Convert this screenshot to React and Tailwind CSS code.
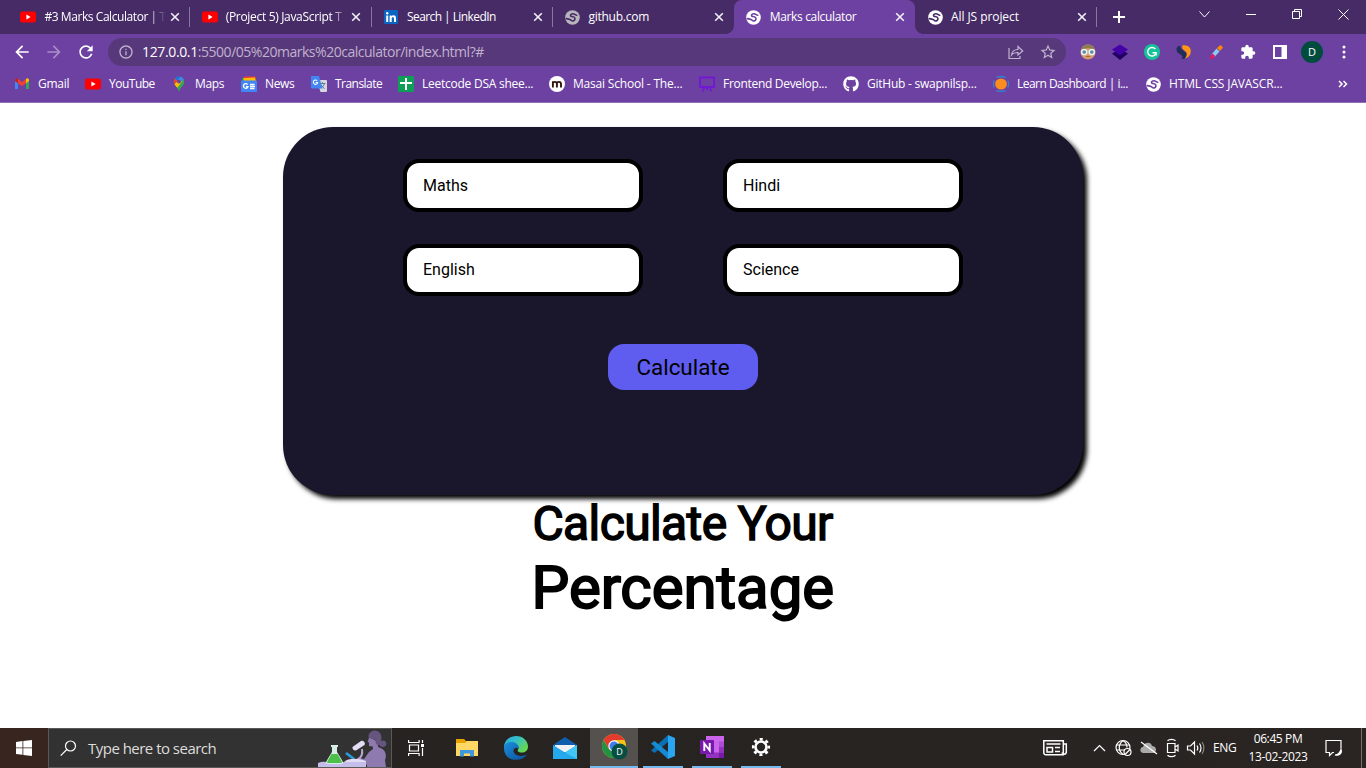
import React from "react";
import { MdOutlineInfo, MdExtension, MdRefresh, MdArrowBack, MdArrowForward, MdStarBorder } from "react-icons/md";
import { FaGithub } from "react-icons/fa";

const ui = "font-['Open_Sans','Noto_Sans',sans-serif]";

function YouTube() {
  return (
    <svg width="16" height="16" viewBox="0 0 16 16">
      <rect x="0" y="2.5" width="16" height="11" rx="2.2" fill="#f00" />
      <path d="M6.4 5.6v4.8L10.6 8z" fill="#fff" />
    </svg>
  );
}

function LinkedIn() {
  return (
    <svg width="14" height="14" viewBox="0 0 14 14">
      <rect width="14" height="14" rx="1" fill="#0a66c2" />
      <path d="M2.2 5.4h2V12h-2zM5.6 5.4h1.9v.9c.9-1.5 4.5-1.6 4.5 1.6V12h-2V8.500c0-1.900-2.300-1.700-2.300 0V12H5.600z" fill="#fff" />
      <circle cx="3.200" cy="3.200" r="1.200" fill="#fff" />
    </svg>
  );
}

function Globe({ color = "#fff", ink = "#6d41a1" }) {
  return (
    <svg width="15" height="15" viewBox="0 0 15 15">
      <circle cx="7.500" cy="7.500" r="7.300" fill={color} />
      <path d="M11.800 5.300C10.500 5.300 9.800 3.700 7.800 3.700 5.500 3.700 4.700 5.800 6.600 6.500 8.600 7 10.400 7.300 9.900 9.200 9.400 11 7.300 11.500 6.200 10.200 5.200 8.900 3.200 9 1.400 8.600" fill="none" stroke={ink} strokeWidth="1.600" strokeLinecap="round" />
    </svg>
  );
}

function Gmail() {
  return (
    <svg width="16" height="16" viewBox="0 0 16 16">
      <path d="M1 4.500V13h3V7z" fill="#4285f4" />
      <path d="M15 4.500V13h-3V7z" fill="#34a853" />
      <path d="M1 4c0-1.700 1.800-2.200 3-1.200v4.400L1 5z" fill="#c5221f" />
      <path d="M15 4c0-1.700-1.800-2.200-3-1.200v4.400L15 5z" fill="#fbbc04" />
      <path d="M4 3l4 3 4-3v4.200l-4 3-4-3z" fill="#ea4335" />
    </svg>
  );
}

function Maps() {
  return (
    <svg width="16" height="16" viewBox="0 0 16 16">
      <path d="M8 .5A5.200 5.200 0 0 0 2.800 5.700C2.800 9.600 7 11 8 15.500c1-4.500 5.200-5.900 5.200-9.800A5.200 5.200 0 0 0 8 .5z" fill="#34a853" />
      <path d="M4 2.400A5.200 5.200 0 0 1 9.600.8L6 5z" fill="#1a73e8" />
      <path d="M4 2.400C2.400 4.300 2.500 6.500 3.500 8.200L7 4.900z" fill="#ea4335" />
      <path d="M9.600.8a5.200 5.200 0 0 1 3 2.500L9 7.400 7 4z" fill="#4285f4" />
      <path d="M3.500 8.200c.7 1.200 1.900 2.300 2.900 3.700l5-6.200L8 4z" fill="#fbbc04" />
      <path d="M12.600 3.300c1.500 3.600-1 6-2.700 8.000-1 1.300-1.500 2.500-1.900 4.200-.4-1.500-.8-2.500-1.600-3.600z" fill="#34a853" />
      <circle cx="8" cy="5.600" r="1.900" fill="#6d41a1" />
    </svg>
  );
}

function News() {
  return (
    <svg width="16" height="16" viewBox="0 0 16 16">
      <path d="M1 2h6v5H1z" fill="#0f9d58" />
      <path d="M3 .5h11.500V5H3z" fill="#ea4335" />
      <path d="M2 2.200 14 1.500l1 4H3z" fill="#fbbc04" />
      <rect x="0" y="4.500" width="16" height="11.500" rx="1" fill="#4285f4" />
      <path d="M6.600 8.600A2.300 2.300 0 1 0 7 10.600H4.900M9 8.500h4.500M9 10.500h5M9 12.500h4.500" fill="none" stroke="#fff" strokeWidth="1.300" />
    </svg>
  );
}

function Translate() {
  return (
    <svg width="16" height="16" viewBox="0 0 16 16">
      <path d="M6 4h9a1 1 0 0 1 1 1v10a1 1 0 0 1-1 1H9.500z" fill="#d5d9df" />
      <path d="M8.500 7.500h6M11.500 6.200v1.300M13.500 7.500c-.5 2-1.800 3.500-3.500 4.500M10.200 9c.7 1.500 1.800 2.700 3.300 3.500" stroke="#607d8b" fill="none" />
      <path d="M1 0h7l3.500 12.500H1a1 1 0 0 1-1-1V1a1 1 0 0 1 1-1z" fill="#4285f4" />
      <path d="M6.200 4.700A2.200 2.200 0 1 0 6.700 6.500H4.600" fill="none" stroke="#fff" strokeWidth="1.100" />
    </svg>
  );
}

function Sheets() {
  return (
    <svg width="16" height="16" viewBox="0 0 16 16">
      <rect width="16" height="16" rx="1" fill="#0f9d58" />
      <path d="M7 2h2v4h5v2H9v6H7V8H2V6h5z" fill="#fff" />
    </svg>
  );
}

function Masai() {
  return (
    <svg width="16" height="16" viewBox="0 0 16 16">
      <circle cx="8" cy="8" r="8" fill="#fff" />
      <path d="M3.900 11.500V5.300M3.900 7.500c0-2.200 4-2.300 4 .2v3.800M7.900 7.700c0-2.500 4.100-2.400 4.100.2v3.600" fill="none" stroke="#33180f" strokeWidth="1.900" />
    </svg>
  );
}

function Easel() {
  return (
    <svg width="16" height="16" viewBox="0 0 16 16" fill="none" stroke="#7415d6" strokeWidth="1.800">
      <rect x="1" y="1.500" width="14" height="9.500" />
      <path d="M5.500 11 3.500 15.500M10.500 11l2 4.500M8 11V14" />
    </svg>
  );
}

function Learn() {
  return (
    <svg width="16" height="16" viewBox="0 0 16 16" fill="none">
      <ellipse cx="8" cy="8" rx="5.900" ry="5.500" fill="#fb8c1e" />
      <path d="M3.500 1.300c2.500-.8 6.500-.8 9 0M3.500 14.700c2.500.8 6.500.8 9 0M1.300 4.500C.2 6.500.2 9.500 1.300 11.500M14.700 4.500c1.100 2 1.100 5 0 7" stroke="#2d86d0" strokeWidth="1.300" />
    </svg>
  );
}

function Close() {
  return (
    <svg width="10" height="10" viewBox="0 0 10 10" stroke="#f3eff8" strokeWidth="1.600">
      <path d="M1.200 1.200l7.600 7.600M8.800 1.200 1.200 8.800" />
    </svg>
  );
}

const tabs = [
  { icon: <YouTube />, title: "#3 Marks Calculator | T", track: "tracking-[-0.430px]", sep: true, fade: true },
  { icon: <YouTube />, title: "(Project 5) JavaScript T", track: "tracking-[-0.320px]", sep: true, fade: true },
  { icon: <LinkedIn />, title: "Search | LinkedIn", track: "tracking-[-0.580px]", sep: true },
  { icon: <Globe color="#b9b5bd" ink="#462b66" />, title: "github.com", track: "tracking-[-0.240px]" },
  { icon: <Globe />, title: "Marks calculator", track: "tracking-[-0.340px]", active: true },
  { icon: <Globe ink="#462b66" />, title: "All JS project", track: "tracking-[-0.080px]", sep: true },
];

function Tab({ tab }) {
  return (
    <div className={`relative flex h-[34px] w-[181.330px] shrink-0 items-center pl-3 pr-[9.600px] ${tab.active ? "rounded-t-lg bg-[#6d41a1]" : ""}`}>
      {tab.active && (
        <>
          <span className="absolute -left-2 bottom-0 size-2 bg-[radial-gradient(circle_at_0_0,transparent_7.500px,#6d41a1_8px)]" />
          <span className="absolute -right-2 bottom-0 size-2 bg-[radial-gradient(circle_at_100%_0,transparent_7.500px,#6d41a1_8px)]" />
        </>
      )}
      <span className="flex w-4 shrink-0 justify-center">{tab.icon}</span>
      <span className={`ml-2 w-[122px] whitespace-nowrap ${tab.track} ${tab.fade ? "[mask-image:linear-gradient(to_right,#000_86%,transparent)]" : ""}`}>
        {tab.title}
      </span>
      <span className="ml-auto flex"><Close /></span>
      {tab.sep && <span className="absolute right-[-0.600px] top-[7px] h-5 w-px bg-[#8a77a0]" />}
    </div>
  );
}

function TabStrip() {
  return (
    <div className="flex h-[34px] bg-[#462b66] pl-[8.400px] text-xs text-white">
      {tabs.map((t) => <Tab key={t.title} tab={t} />)}
      <svg className="ml-[16.600px] mt-[11px]" width="12" height="12" viewBox="0 0 12 12" stroke="#fff" strokeWidth="2"><path d="M6 0v12M0 6h12" /></svg>
      <div className="ml-auto flex pr-[14px] pt-[9px]">
        <svg width="155" height="12" viewBox="0 0 155 12" fill="none" stroke="#fff">
          <path d="M2.500 2.500 7.500 8l5-5.500M49 5.500h10M95.500 2.500h7v7h-7zM97.500 2.500v-2h7v7h-2M141.500.5l10 10M151.500.5l-10 10" />
        </svg>
      </div>
    </div>
  );
}

function Extensions() {
  return (
    <div className="flex items-center">
      <svg className="mr-4" width="16" height="16" viewBox="0 0 16 16">
        <circle cx="8" cy="8" r="7.500" fill="#d49a6a" />
        <path d="M1 6C2 1 5 .5 8 .5S14 1 15 6L8 4z" fill="#8f7a55" />
        <circle cx="4.200" cy="8" r="2.600" fill="#5b8fa0" stroke="#e9f3f4" strokeWidth="1.500" />
        <circle cx="11.800" cy="8" r="2.600" fill="#5b8fa0" stroke="#e9f3f4" strokeWidth="1.500" />
        <path d="M6 12.500h4" stroke="#b7653f" />
      </svg>
      <svg className="mr-4" width="16" height="16" viewBox="0 0 16 16">
        <path d="M0 9.500 8 5l8 4.500L8 16z" fill="#210064" />
        <path d="M0 5.500 8 .5l8 5-8 6z" fill="#4500a8" />
      </svg>
      <svg className="mr-4" width="16" height="16" viewBox="0 0 16 16">
        <circle cx="8" cy="8" r="8" fill="#15c39a" />
        <path d="M11.300 5A4.300 4.300 0 1 0 12 9.300M8.500 8.700h3.600v2.800" fill="none" stroke="#fff" strokeWidth="1.400" />
      </svg>
      <svg className="mr-4" width="16" height="16" viewBox="0 0 16 16">
        <path d="M4.500 1.500C0 2-1 7 3 9.500s4 3.500 2.500 5.500c5.500.5 6.500-5 3.500-7S3.500 4 4.500 1.500z" fill="#1f2d57" />
        <path d="M6.500 1.500C13 .5 16 5 14.500 9.500c-.7 2.500-3 4.500-5.500 5 3-4 2-6 0-7.500-2.500-2-3.500-3-2.500-5.500z" fill="#fe9713" />
      </svg>
      <svg className="mr-4" width="16" height="16" viewBox="0 0 16 16">
        <path d="m9 4 3.500-3L15 3.500 12 7z" fill="#ff8a00" />
        <path d="m8.500 4.500 3 3-5 5.500-3-2.500z" fill="#8bc9f0" />
        <path d="m4.500 9.500 2.700 2.500L4 15l-2.500-.5z" fill="#ec1561" />
      </svg>
      <MdExtension className="mr-[17px] size-4 text-white" />
      <svg className="mr-[14px]" width="14" height="14" viewBox="0 0 14 14"><path d="M0 0h14v14H0zM2 2v10h6.500V2z" fill="#fff" fillRule="evenodd" /></svg>
      <span className="mr-[19px] flex size-[22px] items-center justify-center rounded-full bg-[#004d40] text-[11px] text-white">D</span>
      <svg width="4" height="14" viewBox="0 0 4 14" fill="#fff"><circle cx="2" cy="2" r="1.500" /><circle cx="2" cy="7" r="1.500" /><circle cx="2" cy="12" r="1.500" /></svg>
    </div>
  );
}

function Toolbar() {
  return (
    <div className="flex h-[36px] items-center justify-between pl-3 pr-5">
      <div className="flex items-center text-white">
        <MdArrowBack className="size-5" />
        <MdArrowForward className="ml-3 size-5 text-[#a78dc6]" />
        <MdRefresh className="ml-3 size-5" />
      </div>
      <div className="ml-3 mr-[14px] flex h-7 flex-1 items-center rounded-full bg-[#57387b] px-[10px] text-[#c0b3ce]">
        <MdOutlineInfo className="size-4" />
        <span className="ml-2 whitespace-nowrap text-sm tracking-[-0.480px]"><span className="tracking-[-0.360px] text-white">127.0.0.1</span>:5500/05%20marks%20calculator/index.html?#</span>
        <svg className="ml-auto mr-[15px]" width="16" height="16" viewBox="0 0 16 16" fill="none" stroke="currentColor" strokeWidth="1.200">
          <path d="M1 4v10.500h11V12M3.500 11c.5-4 3-5.500 6.500-5.500v-3L14.700 7 10 11V8.500C7 8.500 5 9 3.500 11z" />
        </svg>
        <MdStarBorder className="-mr-px size-[18px]" />
      </div>
      <Extensions />
    </div>
  );
}

const bookmarks = [
  { icon: <Gmail />, label: "Gmail", w: "w-[71px]", track: "tracking-[-0.240px]" },
  { icon: <YouTube />, label: "YouTube", w: "w-[86px]", track: "tracking-[-0.500px]" },
  { icon: <Maps />, label: "Maps", w: "w-[70px]", track: "tracking-[-0.340px]" },
  { icon: <News />, label: "News", w: "w-[70px]", track: "tracking-[-0.340px]" },
  { icon: <Translate />, label: "Translate", w: "w-[87px]", track: "tracking-[-0.540px]" },
  { icon: <Sheets />, label: "Leetcode DSA shee...", w: "w-[151px]", track: "tracking-[-0.250px]" },
  { icon: <Masai />, label: "Masai School - The...", w: "w-[150px]", track: "tracking-[-0.190px]" },
  { icon: <Easel />, label: "Frontend Develop...", w: "w-[144px]", track: "tracking-[-0.300px]" },
  { icon: <FaGithub className="size-4" />, label: "GitHub - swapnilsp...", w: "w-[150px]", track: "tracking-[-0.240px]" },
  { icon: <Learn />, label: "Learn Dashboard | i...", w: "w-[152px]", track: "tracking-[-0.520px]" },
  { icon: <Globe />, label: "HTML CSS JAVASCR...", w: "w-[150px]", track: "tracking-[-0.130px]" },
];

function Bookmarks() {
  return (
    <div className="flex h-[33px] items-center border-b border-[#8f6fb6] pb-1 pl-[14px] pr-[18px] text-xs text-white">
      {bookmarks.map((b) => (
        <div key={b.label} className={`flex shrink-0 items-center gap-2 whitespace-nowrap ${b.w} ${b.track}`}>
          <span className="flex w-4 shrink-0 justify-center">{b.icon}</span>
          <span>{b.label}</span>
        </div>
      ))}
      <svg className="ml-auto" width="10" height="8" viewBox="0 0 10 8" fill="none" stroke="#fff" strokeWidth="1.500"><path d="m1 1 3 3-3 3M5.500 1l3 3-3 3" /></svg>
    </div>
  );
}

function Field({ label }) {
  return (
    <div className="flex h-[52.600px] w-60 items-center rounded-2xl border-4 border-black bg-white px-4 pt-[0.800px] text-base text-black">{label}</div>
  );
}

function Page() {
  return (
    <main className="flex flex-1 flex-col items-center bg-white pt-6 font-['Roboto',sans-serif] text-black">
      <section className="flex h-[368px] w-[800px] flex-col items-center rounded-[50px] bg-[#1a172c] pt-8 shadow-[4px_4px_5px_#000]">
        <div className="grid grid-cols-2 gap-x-20 gap-y-8">
          <Field label="Maths" />
          <Field label="Hindi" />
          <Field label="English" />
          <Field label="Science" />
        </div>
        <button className="mt-12 h-[46px] w-[150px] rounded-2xl bg-[#5f5df0] pt-[2px] text-[22.400px]">Calculate</button>
      </section>
      <h1 className="-ml-px w-[300px] whitespace-nowrap text-[48px] leading-[57px] tracking-[-0.620px] [-webkit-text-stroke:1.500px_#000]">Calculate Your</h1>
      <h2 className="-ml-[3px] w-[300px] whitespace-nowrap text-[60px] leading-[72px] tracking-[-0.070px] [-webkit-text-stroke:1.900px_#000]">Percentage</h2>
    </main>
  );
}

function SearchArt() {
  return (
    <svg className="ml-auto self-end" width="70" height="38" viewBox="0 0 70 38">
      <path d="M51 8c0 3-2 4-1 5l1 .5v3c0 1 2 1 3.500.7L55 20l-4 3-5 7-4-1-1 4 8 3v2h19l-1-7c2-5 1-11-7-13v-5z" fill="#8e7aae" />
      <path d="M50.500 8C50 2 58-1 62 4c2 3 1.500 6 1 8 4-2 7 2 4.500 5-2 2-5 1-6-1-2 1-4-1-4-4-1-3-4-1-7-4z" fill="#66557f" />
      <path d="M0 34c4-2 8-1 12-1h36v5H0z" fill="#c5bdea" />
      <path d="M13 16h7v2h-1v5l5.500 9c1 2 0 3-2 3H10.500c-2 0-3-1-2-3l5.500-9v-5h-1z" fill="#d4eee5" />
      <path d="m13.500 25-4 7c-1 2 0 2 2 2h10c2 0 3 0 2-2l-4-7z" fill="#4cc04b" />
      <path d="m28 24 8 6" stroke="#299fe0" strokeWidth="2.500" />
      <path d="M34.500 18 43 12c2-1 5 2 3.500 4L38 21.500c-2 .5-4-1.500-3.500-3.500z" fill="#e5ddf5" />
      <path d="M44 20c1 5-1 9-5 11" stroke="#b7a6d3" strokeWidth="2" fill="none" />
      <path d="M26 33c4-4 14-4 22-1v1z" fill="#e2dcf3" />
    </svg>
  );
}

function TrayIcons() {
  return (
    <svg width="164" height="20" viewBox="0 0 164 20" fill="none" stroke="#fff" strokeWidth="1.200">
      <path d="M.8 2.800h19.500v14H3a2 2 0 0 1-2.200-2zM20.300 6h3v8.500a2.200 2.200 0 0 1-4.300 0M4 9.500h5.500v4.500H4zM12 9.500h5M12 13.500h5M3.500 6h14" strokeWidth="1.500" />
      <path d="m51 13 5.500-5.500L62 13" />
      <circle cx="80" cy="9.500" r="7" />
      <path d="M80 2.500c-5 4-5 10 0 14M80 2.500c3 2 4 4 4 7M73.500 7h13M73 12h9" />
      <circle cx="84.500" cy="14" r="3.500" fill="#2a2523" /><path d="m82 16.500 5-5" />
      <path d="M100 15c-4-1-3-6 0-6 1-5 8-6 9-1 5 0 5 6 2 7z" fill="#aaa" stroke="none" />
      <path d="m98 4 16 12" />
      <path d="M124.500 5.500h7.500v9h-7.500zM132 9l3-2v6l-3-2M124.500 2.800c2-1.800 6-1.800 8 0M124.500 17.200c2 1.800 6 1.800 8 0" />
      <path d="M144.500 8h3l4-4v12l-4-4h-3zM154 7.500c1 1.500 1 3.500 0 5M156.500 5.500c2 2.500 2 6.500 0 9" /><path d="M159 4c2.500 3.500 2.500 8.500 0 12" stroke="#888" />
    </svg>
  );
}

function TaskItem({ children, className = "" }) {
  return <div className={`flex h-10 items-center justify-center ${className}`}>{children}</div>;
}

function Taskbar() {
  return (
    <footer className="flex h-10 bg-[linear-gradient(to_right,#38251f_0,#38251f_48px,#262321_392px,#2a2522_100%)] text-white">
      <TaskItem className="w-12">
        <svg width="16" height="16" viewBox="0 0 16 16" fill="#fff"><path d="M0 2 6.500 1v6.500H0zM7.300 .9 16 0v7.500H7.300zM0 8.300h6.500v6.500L0 14zM7.300 8.300H16V16l-8.700-1z" /></svg>
      </TaskItem>
      <div className="flex h-10 w-[344px] items-center border border-[#5a5958] bg-[#333232] pl-[11px] pr-[3px]">
        <svg width="17" height="17" viewBox="0 0 17 17" fill="none" stroke="#fff" strokeWidth="1.200"><circle cx="10.500" cy="6" r="5" /><path d="M6.800 9.500.7 15.700" /></svg>
        <span className="ml-[11px] whitespace-nowrap text-[15px] tracking-[-0.520px] text-[#dedcdb]">Type here to search</span>
        <SearchArt />
      </div>
      <TaskItem className="w-12">
        <svg width="17" height="16" viewBox="0 0 17 16" fill="none" stroke="#fff" strokeWidth="1.200"><path d="M.6 0v2.500h10.500V0M.6 16v-2.500h10.500V16M1.500 5h9v6h-9zM14.500 0v3M14.500 8v8" /><path d="M13 4h3v3h-3z" fill="#fff" stroke="none" /></svg>
      </TaskItem>
      <TaskItem className="ml-[3px] w-12">
        <svg width="22" height="20" viewBox="0 0 22 20"><path d="M0 1h8l2 2h12v4H0z" fill="#e8a200" /><path d="M0 5h9l2-2h11v15H0z" fill="#ffd765" /><path d="M4 18.500V12h14v6.500h-4V15.500H8v3z" fill="#3f98dc" /></svg>
      </TaskItem>
      <TaskItem className="ml-px w-12">
        <svg width="24" height="24" viewBox="0 0 24 24">
          <defs>
            <linearGradient id="edgeTop" x1="0" x2="1" y2=".6"><stop stopColor="#2aa7df" /><stop offset=".5" stopColor="#35c1c6" /><stop offset="1" stopColor="#66d851" /></linearGradient>
            <linearGradient id="edgeLow" x1="0" x2="1" y2="1"><stop stopColor="#1b8fdc" /><stop offset="1" stopColor="#0c4f9b" /></linearGradient>
          </defs>
          <path d="M0 12C0 3 7 0 12 0c7 0 12 5 12 10.500 0 4-3 6-6 6-3.500 0-5-1.500-4-3 2-3-1-6-5-6-5 0-9 3-9 4.500z" fill="url(#edgeTop)" />
          <path d="M0 12C0 8 4 5.500 8 6c5 .3 7 4 6 6.500-2-2-5 0-4.500 3 1 4 7 6 13.500 3C19 26 0 27 0 12z" fill="url(#edgeLow)" />
        </svg>
      </TaskItem>
      <TaskItem className="ml-px w-12">
        <svg width="24" height="22" viewBox="0 0 24 22"><path d="M0 8 12 0l12 8v3H0z" fill="#0f5fae" /><path d="M2 8h20v7H2z" fill="#f2f2f5" /><path d="m0 8 12 7.500L24 8v14H0z" fill="#26a8ed" /><path d="m12 15.500 12 6.500V8z" fill="#42c5f7" /></svg>
      </TaskItem>
      <TaskItem className="ml-px w-12 border-b-2 border-[#76b9ed] bg-[#55514f]">
        <svg width="28" height="26" viewBox="0 0 28 26">
          <circle cx="14" cy="12" r="12" fill="#fbc116" />
          <path d="M3.600 6A12 12 0 0 1 24.400 6H14l-5 9z" fill="#e33b2e" />
          <path d="M3.600 6A12 12 0 0 0 14 24l5-9H9z" fill="#229342" />
          <circle cx="14" cy="12" r="5.700" fill="#fff" /><circle cx="14" cy="12" r="4.500" fill="#3f7cec" />
          <circle cx="19.500" cy="17.500" r="8" fill="#064e41" />
          <text x="19.500" y="20.800" textAnchor="middle" fill="#fff" fontSize="9" fontFamily="Open Sans">D</text>
        </svg>
      </TaskItem>
      <TaskItem className="ml-[5px] w-10 border-b-2 border-[#76b9ed]">
        <svg width="24" height="24" viewBox="0 0 24 24"><path d="M17 0v7L3.500 18 0 15.500z" fill="#0b6fb5" /><path d="M0 8.500 3.500 6 17 17v7z" fill="#168bd2" /><path d="m17 0 7 3v18l-7 3z" fill="#2aa6f0" /></svg>
      </TaskItem>
      <TaskItem className="ml-[9px] w-10 border-b-2 border-[#76b9ed]">
        <svg width="24" height="22" viewBox="0 0 24 22"><path d="M6 0h18v22H6z" fill="#ca64ea" /><path d="M19 5.500h5V11h-5z" fill="#ae4bd5" /><path d="M19 11h5v5.500h-5z" fill="#9332bf" /><path d="M6 16.500h13V22H6z" fill="#9332bf" /><path d="M19 16.500h5V22h-5z" fill="#7719aa" /><rect y="4" width="14" height="14" rx="1" fill="#7719aa" /><path d="M4.300 15V7.500l5.400 7V7" fill="none" stroke="#fff" strokeWidth="1.900" /></svg>
      </TaskItem>
      <TaskItem className="ml-[9px] w-10 border-b-2 border-[#76b9ed]">
        <svg width="20" height="20" viewBox="0 0 20 20" fill="none" stroke="#fff"><circle cx="10" cy="10" r="5.500" strokeWidth="2.600" /><circle cx="10" cy="10" r="7.800" strokeWidth="2.600" strokeDasharray="3.060 3.060" strokeDashoffset="1.530" /></svg>
      </TaskItem>
      <div className="ml-auto flex items-center text-xs">
        <TrayIcons />
        <span className="ml-[6px] w-[24px] tracking-[-0.300px]">ENG</span>
        <div className="ml-[9px] flex w-[64px] flex-col items-center whitespace-nowrap leading-[18px] tracking-[-0.380px]">
          <span>06:45 PM</span>
          <span>13-02-2023</span>
        </div>
        <svg className="ml-[15px]" width="18" height="18" viewBox="0 0 18 18" fill="none" stroke="#fff" strokeWidth="1.200"><path d="M9 13.500H7.500l-3 3v-3H1v-12h15v8" /><path d="M16 10.500c1.500 4-2 6.500-6 5.500 3 0 5-2 6-5.500z" fill="#fff" /></svg>
        <span className="ml-[18px] mr-1 h-10 w-px bg-[#77706c]" />
      </div>
    </footer>
  );
}

export default function App() {
  return (
    <div className={`flex h-[768px] w-[1366px] flex-col overflow-hidden ${ui}`}>
      <header className="flex h-[103px] flex-col bg-[#6d41a1]">
        <TabStrip />
        <Toolbar />
        <Bookmarks />
      </header>
      <Page />
      <Taskbar />
    </div>
  );
}
